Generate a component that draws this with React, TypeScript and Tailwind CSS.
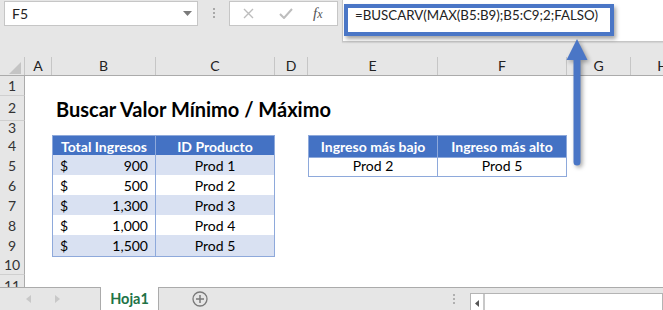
import React from "react";

const GRID = "grid grid-cols-[25px_27px_104px_119px_33px_130px_129px_64px_64px]";
const LETTERS = ["A", "B", "C", "D", "E", "F", "G", "H"];
const FONT = "font-['Lato','Open_Sans',sans-serif]";

function RowHead({ n }: { n: number | string }) {
  return (
    <div className="bg-[#e6e6e6] border-r border-b border-r-[#ababab] border-b-[#cfcfcf] text-[#333] flex items-center justify-center text-[14px] leading-none">
      {n}
    </div>
  );
}

const data = [
  { n: 5, v: "900", p: "Prod 1", shade: true },
  { n: 6, v: "500", p: "Prod 2", shade: false },
  { n: 7, v: "1,300", p: "Prod 3", shade: true },
  { n: 8, v: "1,000", p: "Prod 4", shade: false },
  { n: 9, v: "1,500", p: "Prod 5", shade: true },
];

export default function App() {
  return (
    <div className={`relative w-[663px] h-[310px] overflow-hidden bg-[#e6e6e6] flex flex-col ${FONT} text-black`}>
      {/* Toolbar / formula bar */}
      <div className="h-[57px] flex items-start shrink-0">
        <div className="ml-[4px] mt-[1px] w-[194px] h-[25px] bg-white border border-[#c6c6c6] flex items-center justify-between pl-[7px] pr-[5px]">
          <span className="text-[14px] text-[#222]">F5</span>
          <svg width="9" height="5" viewBox="0 0 9 5"><path d="M0 0 L9 0 L4.5 5 Z" fill="#7a7a7a" /></svg>
        </div>
        <div className="w-[31px] h-[26px] flex flex-col items-center justify-center gap-[2px]">
          <span className="w-[2px] h-[2px] bg-[#a8a8a8]" />
          <span className="w-[2px] h-[2px] bg-[#a8a8a8]" />
          <span className="w-[2px] h-[2px] bg-[#a8a8a8]" />
        </div>
        <div className="mt-[1px] w-[109px] h-[25px] bg-white border border-[#c6c6c6] flex items-center">
          <svg className="ml-[13px]" width="11" height="11" viewBox="0 0 11 11">
            <path d="M1 1 L10 10 M10 1 L1 10" stroke="#bdbdbd" strokeWidth="1.4" />
          </svg>
          <svg className="ml-[25px]" width="14" height="11" viewBox="0 0 14 11">
            <path d="M1 6 L5 10 L13 1" stroke="#bdbdbd" strokeWidth="2" fill="none" />
          </svg>
          <span className="ml-[20px] font-['Liberation_Serif',serif] italic text-[15px] text-[#555] leading-none">
            f<span className="text-[12px]">x</span>
          </span>
        </div>
        <div className="relative ml-[4px] flex-1 h-[42px] bg-white border-l border-b border-[#c6c6c6] shadow-[0_1px_1px_rgba(0,0,0,0.08)]">
          <div className="pl-[12px] pt-[6px] text-[13.3px] leading-[18px] text-[#222] whitespace-nowrap">
            =BUSCARV(MAX(B5:B9);B5:C9;2;FALSO)
          </div>
          <div className="absolute left-[1px] top-[4px] w-[270px] h-[32px] border-[4px] border-[#4a76c6] shadow-[2px_3px_4px_rgba(0,0,0,0.35)]" />
        </div>
      </div>

      {/* Column headers */}
      <div className={`${GRID} h-[19px] shrink-0 border-b border-[#ababab] text-[14px] text-[#222]`}>
        <div className="relative border-r border-[#c6c6c6]">
          <svg className="absolute left-[9px] top-[5px]" width="12" height="12" viewBox="0 0 12 12">
            <path d="M12 0 L12 12 L0 12 Z" fill="#c4c4c4" />
          </svg>
        </div>
        {LETTERS.map((l) => (
          <div key={l} className="border-r border-[#c6c6c6] flex items-center justify-center leading-none">
            {l}
          </div>
        ))}
      </div>

      {/* Sheet */}
      <div className="flex-1 flex flex-col bg-white text-[14px] overflow-hidden">
        <div className={`${GRID} h-[20px] shrink-0`}>
          <RowHead n={1} />
        </div>
        <div className={`${GRID} h-[25px] shrink-0`}>
          <RowHead n={2} />
          <div />
          <div className="col-span-7 flex items-end pl-[4px] pb-[1px] text-[20px] font-bold whitespace-nowrap leading-[22px]">
            Buscar Valor Mínimo / Máximo
          </div>
        </div>
        <div className={`${GRID} h-[14px] shrink-0`}>
          <RowHead n={3} />
        </div>
        <div className={`${GRID} h-[20px] shrink-0`}>
          <RowHead n={4} />
          <div />
          <div className="bg-[#4472c4] border border-[#8ea9db] text-white font-bold flex items-center justify-center">Total Ingresos</div>
          <div className="bg-[#4472c4] border-t border-r border-b border-[#8ea9db] text-white font-bold flex items-center justify-center">ID Producto</div>
          <div />
          <div className="bg-[#4472c4] border border-[#8ea9db] text-white font-bold flex items-center justify-center">Ingreso más bajo</div>
          <div className="bg-[#4472c4] border-t border-r border-b border-[#8ea9db] text-white font-bold flex items-center justify-center">Ingreso más alto</div>
        </div>
        {data.map((r) => (
          <div key={r.n} className={`${GRID} h-[20px] shrink-0`}>
            <RowHead n={r.n} />
            <div />
            <div className={`${r.shade ? "bg-[#d9e1f2]" : "bg-white"} border-l border-r border-b border-[#8ea9db] flex items-center justify-between px-[7px]`}>
              <span>$</span>
              <span>{r.v}</span>
            </div>
            <div className={`${r.shade ? "bg-[#d9e1f2]" : "bg-white"} border-r border-b border-[#8ea9db] flex items-center justify-center`}>
              {r.p}
            </div>
            {r.n === 5 && (
              <>
                <div />
                <div className="border-l border-r border-b border-[#8ea9db] flex items-center justify-center">Prod 2</div>
                <div className="border-r border-b border-[#8ea9db] flex items-center justify-center">Prod 5</div>
              </>
            )}
          </div>
        ))}
        <div className={`${GRID} h-[20px] shrink-0`}>
          <RowHead n={10} />
        </div>
        <div className={`${GRID} flex-1`}>
          <div className="bg-[#e6e6e6] border-r border-[#ababab] text-[#333] flex justify-center text-[14px] leading-none pt-[4px]">11</div>
        </div>
      </div>

      {/* Tab bar */}
      <div className="h-[23px] shrink-0 border-t border-[#ababab] bg-[#e6e6e6] flex items-start">
        <div className="w-[100px] h-full flex items-center">
          <svg className="ml-[26px]" width="5" height="8" viewBox="0 0 5 8"><path d="M5 0 L5 8 L0 4 Z" fill="#c8c8c8" /></svg>
          <svg className="ml-[24px]" width="5" height="8" viewBox="0 0 5 8"><path d="M0 0 L0 8 L5 4 Z" fill="#c8c8c8" /></svg>
        </div>
        <div className="-mt-[1px] w-[59px] h-[24px] bg-white border-l border-r border-[#ababab] flex items-center justify-center text-[14.5px] font-bold text-[#217346]">
          Hoja1
        </div>
        <div className="ml-[33px] h-full flex items-center">
          <svg width="16" height="16" viewBox="0 0 16 16">
            <circle cx="8" cy="8" r="7" fill="none" stroke="#7a7a7a" strokeWidth="1.3" />
            <path d="M8 4 V12 M4 8 H12" stroke="#7a7a7a" strokeWidth="1.5" />
          </svg>
        </div>
        <div className="ml-auto flex items-start">
          <div className="mt-[6px] flex flex-col gap-[2px] mr-[15px]">
            <span className="w-[2px] h-[2px] bg-[#b0b0b0]" />
            <span className="w-[2px] h-[2px] bg-[#b0b0b0]" />
            <span className="w-[2px] h-[2px] bg-[#b0b0b0]" />
          </div>
          <div className="mt-[5px] w-[193px] h-[20px] bg-white border border-[#b4b4b4] flex">
            <div className="w-[14px] h-full border-r-[2px] border-[#c8c8c8] flex items-center justify-center">
              <svg width="4" height="7" viewBox="0 0 4 7"><path d="M4 0 L4 7 L0 3.5 Z" fill="#555" /></svg>
            </div>
          </div>
        </div>
      </div>

      {/* Annotation arrow */}
      <svg className="absolute left-[555px] top-[30px] drop-shadow-[2px_2px_2px_rgba(0,0,0,0.35)]" width="40" height="140" viewBox="0 0 40 140">
        <path d="M22 9 L32.5 30 L25.5 30 L25.5 132 Q25.5 135.5 22 135.5 Q18.5 135.5 18.5 132 L18.5 30 L11.5 30 Z" fill="#4a76c6" />
      </svg>
    </div>
  );
}
